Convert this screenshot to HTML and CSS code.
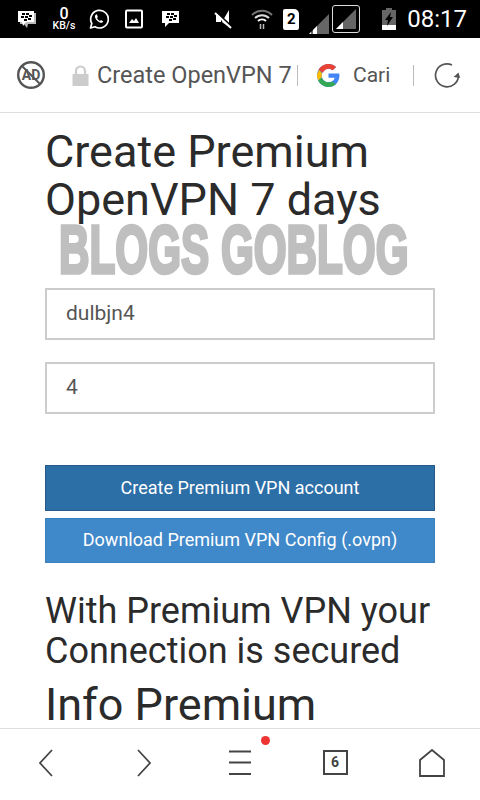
FILE: index.html
```html
<!DOCTYPE html>
<html lang="en">
<head>
    <meta charset="UTF-8" />
    <meta name="viewport" content="width=device-width, initial-scale=1.0" />
    <title>Create Premium OpenVPN 7 days</title>
    <link rel="stylesheet" href="styles.css">
</head>
<body>
    <div class="phone">
        <!-- Android status bar -->
        <div class="status-bar">
            <div class="status-left">
                <svg class="ic-bbm" width="21" height="20" viewBox="0 0 21 20">
                    <path d="M3 4h16v11h-8l-1 4-3-4H3z" fill="#bbb"/>
                    <path d="M1 2h16v11H9l-3 4-1-4H1z" fill="#fff"/>
                    <g fill="#000"><rect x="5" y="4" width="3" height="2"/><rect x="9" y="4" width="3" height="2"/><rect x="4" y="7" width="3" height="2"/><rect x="8" y="7" width="3" height="2"/><rect x="12" y="6" width="3" height="2"/><rect x="7" y="10" width="3" height="2"/><rect x="11" y="9" width="3" height="2"/></g>
                </svg>
                <div class="speed">
                    <span class="speed-num">0</span>
                    <span class="speed-unit">KB/s</span>
                </div>
                <svg class="ic-wa" width="20" height="20" viewBox="0 0 20 20">
                    <path d="M1.5 19l1.3-4.6A8.8 8.8 0 1 1 6 17.7z" fill="none" stroke="#fff" stroke-width="1.7" stroke-linejoin="round"/>
                    <path d="M7 5.5c-1.200.7-1.300 2.200-.6 3.800 1 2 2.600 3.500 4.500 4.300 1.400.5 2.800.1 3.400-1.200l-2.300-1.400-1 1c-1.300-.5-2.400-1.600-3-3l.9-1L7.800 5.300z" fill="#fff"/>
                </svg>
                <svg class="ic-pic" width="18" height="20" viewBox="0 0 18 20">
                    <rect x="1" y="1.500" width="16" height="17" rx="1" fill="none" stroke="#fff" stroke-width="2"/>
                    <path d="M4 14l3-4 2 2 2-3 3 5z" fill="#fff"/>
                </svg>
                <svg class="ic-bbm2" width="19" height="18" viewBox="0 0 19 18">
                    <path d="M1 1h17v12H8l-4 4v-4H1z" fill="#fff"/>
                    <g fill="#000"><rect x="6" y="3" width="3" height="2"/><rect x="10" y="3" width="3" height="2"/><rect x="5" y="6" width="3" height="2"/><rect x="9" y="6" width="3" height="2"/><rect x="13" y="5" width="3" height="2"/><rect x="8" y="9" width="3" height="2"/><rect x="12" y="8" width="3" height="2"/></g>
                </svg>
            </div>
            <div class="status-right">
                <svg class="ic-mute" width="18" height="20" viewBox="0 0 18 20">
                    <path d="M15 1v17l-7-5z" fill="#fff"/>
                    <path d="M2 6h5v7H2z" fill="#fff"/>
                    <path d="M1 2l16 15" stroke="#000" stroke-width="2"/>
                    <path d="M1 4l16 15" stroke="#fff" stroke-width="2"/>
                </svg>
                <svg class="ic-wifi" width="22" height="22" viewBox="0 0 22 22">
                    <path d="M1 7a14 14 0 0 1 20 0" fill="none" stroke="#777" stroke-width="2"/>
                    <path d="M4 10a10 10 0 0 1 14 0" fill="none" stroke="#ddd" stroke-width="2"/>
                    <path d="M7 13a6 6 0 0 1 8 0" fill="none" stroke="#fff" stroke-width="2"/>
                    <path d="M9.500 16v5M12.500 16v5" stroke="#bbb" stroke-width="1.500"/>
                </svg>
                <span class="sim">2</span>
                <svg class="ic-signal" width="21" height="21" viewBox="0 0 21 21">
                    <path d="M21 1v20H1z" fill="#666"/>
                    <path d="M5 21h4v-8l-4 4z M1 21h2v-2z" fill="#fff"/>
                </svg>
                <div class="signal-box">
                    <svg width="22" height="22" viewBox="0 0 22 22">
                        <path d="M21 1v20H1z" fill="#666"/>
                        <path d="M1 21h7v-7z" fill="#fff"/>
                    </svg>
                </div>
                <svg class="ic-batt" width="14" height="22" viewBox="0 0 14 22">
                    <path d="M4 0h6v2h4v20H0V2h4z" fill="#666"/>
                    <rect x="0" y="17" width="14" height="5" fill="#fff"/>
                    <path d="M9 4L3 12h3l-1 6 6-9H8z" fill="#000"/>
                </svg>
                <span class="clock">08:17</span>
            </div>
        </div>

        <!-- browser address bar -->
        <div class="address-bar">
            <div class="ad-block">
                <svg width="30" height="30" viewBox="0 0 30 30">
                    <circle cx="15" cy="15" r="12.800" fill="none" stroke="#555" stroke-width="2.400"/>
                    <path d="M6 6l18 18" stroke="#555" stroke-width="2"/>
                </svg>
                <span class="ad-text">AD</span>
            </div>
            <svg class="ic-lock" width="17" height="21" viewBox="0 0 17 21">
                <path d="M4 10V6a4.500 4.500 0 0 1 9 0v4" fill="none" stroke="#ccc" stroke-width="2.200"/>
                <rect x="0.500" y="9" width="16" height="12" fill="#ccc"/>
            </svg>
            <span class="page-title">Create OpenVPN 7</span>
            <span class="bar-sep"></span>
            <svg class="ic-google" width="25" height="25" viewBox="0 0 48 48">
                <path d="M44.500 20H24v8.500h11.800C34.700 33.900 30.100 37 24 37c-7.200 0-13-5.800-13-13s5.800-13 13-13c3.100 0 5.900 1.100 8.100 2.900l6.400-6.400C34.600 4.100 29.600 2 24 2 11.800 2 2 11.800 2 24s9.800 22 22 22c11 0 21-8 21-22 0-1.300-.2-2.700-.5-4z" fill="#4285f4"/>
                <path d="M6.300 13.700l7 5.100C15.100 14.300 19.200 11 24 11c3.100 0 5.900 1.100 8.100 2.900l6.400-6.400C34.600 4.100 29.600 2 24 2 15.600 2 8.300 6.800 4.600 13.700z" fill="#ea4335"/>
                <path d="M24 46c5.500 0 10.400-1.900 14.200-5.100l-6.600-5.500C29.500 36.900 26.900 37 24 37c-6 0-11.100-3.800-12.900-9.300l-7 5.400C7.700 40.600 15.300 46 24 46z" fill="#34a853"/>
                <path d="M6 13.500C3.500 17.200 2 20.400 2 24s.8 6.600 2.100 9.100l7-5.400c-.5-1.200-.1-2.400-.1-3.700s.1-2.900.5-4.200l-5.500-6.300z" fill="#fbbc05"/>
            </svg>
            <span class="search-label">Cari</span>
            <span class="bar-sep bar-sep-2"></span>
            <svg class="ic-reload" width="27" height="27" viewBox="0 0 27 27">
                <path d="M24.500 13.500A11.500 11.500 0 1 1 18 3" fill="none" stroke="#555" stroke-width="1.700"/>
                <path d="M26 13l-6.500-1 5-4.500z" fill="#555" transform="translate(0 3)"/>
            </svg>
        </div>

        <!-- page -->
        <div class="page">
            <h1>Create Premium OpenVPN 7 days</h1>
            <hr class="rule">
            <input class="field" type="text" value="dulbjn4">
            <input class="field" type="text" value="4">
            <button class="btn btn-dark">Create Premium VPN account</button>
            <button class="btn btn-light">Download Premium VPN Config (.ovpn)</button>
            <h2>With Premium VPN your Connection is secured</h2>
            <h3>Info Premium</h3>
            <div class="watermark">BLOGS GOBLOG</div>
        </div>

        <!-- browser toolbar -->
        <div class="bottom-bar">
            <svg class="back-icon" width="16" height="28" viewBox="0 0 16 28"><path d="M14 1L2 14l12 13" fill="none" stroke="#444" stroke-width="1.800"/></svg>
            <svg width="16" height="28" viewBox="0 0 16 28"><path d="M2 1l12 13L2 27" fill="none" stroke="#444" stroke-width="1.800"/></svg>
            <div class="menu-btn">
                <svg width="22" height="26" viewBox="0 0 22 26"><path d="M0 1.500h22M0 12.500h22M0 24h22" stroke="#444" stroke-width="1.800"/></svg>
                <span class="red-dot"></span>
            </div>
            <span class="tab-count">6</span>
            <svg width="26" height="28" viewBox="0 0 26 28"><path d="M1 27V11L13 1l12 10v16z" fill="none" stroke="#444" stroke-width="1.800"/></svg>
        </div>
    </div>
</body>
</html>
```
FILE: styles.css
```css
* {
    box-sizing: border-box;
}
html, body {
    margin: 0;
    padding: 0;
    background: #fff;
}
body {
    font-family: Roboto, "Liberation Sans", sans-serif;
}
svg {
    display: block;
    flex: none;
}
.phone {
    width: 480px;
    height: 800px;
    display: flex;
    flex-direction: column;
    overflow: hidden;
}

/* status bar */
.status-bar {
    height: 38px;
    flex: none;
    background: #000;
    color: #fff;
    display: flex;
    justify-content: space-between;
    align-items: center;
    padding: 0 13px 0 17px;
}
.status-left, .status-right {
    display: flex;
    align-items: center;
}
.speed {
    width: 24px;
    margin-left: 14px;
    display: flex;
    flex-direction: column;
    align-items: center;
    line-height: 1;
}
.speed-num {
    font-size: 16px;
    font-weight: 500;
    height: 15px;
}
.speed-unit {
    font-size: 10.5px;
    font-weight: 500;
}
.ic-wa {
    margin-left: 13px;
}
.ic-pic {
    margin-left: 16px;
}
.ic-bbm2 {
    margin-left: 18px;
}
.sim {
    width: 16px;
    height: 21px;
    margin-left: 10px;
    background: #fff;
    color: #000;
    border-radius: 2px 5px 2px 2px;
    font-size: 15px;
    font-weight: 700;
    line-height: 21px;
    text-align: center;
}
.ic-wifi {
    margin-left: 19px;
}
.ic-signal {
    margin-left: 9px;
    margin-top: 8px;
}
.signal-box {
    width: 28px;
    height: 28px;
    margin-left: 3px;
    border: 1.500px solid #ddd;
    border-radius: 3px;
    display: flex;
    align-items: center;
    justify-content: center;
}
.ic-batt {
    margin-left: 22px;
}
.clock {
    font-size: 24px;
    margin-left: 11px;
    line-height: 1;
}

/* address bar */
.address-bar {
    height: 75px;
    flex: none;
    display: flex;
    align-items: center;
    padding: 0 0 0 16px;
    border-bottom: 1px solid #ddd;
    color: #555;
}
.ad-block {
    position: relative;
}
.ad-text {
    position: absolute;
    inset: 0;
    text-align: center;
    font-size: 14px;
    font-weight: 700;
    line-height: 30px;
    color: #555;
}
.ic-lock {
    margin-left: 26px;
}
.page-title {
    font-size: 23.5px;
    margin-left: 8px;
    width: 200px;
    overflow: hidden;
    white-space: nowrap;
}
.bar-sep {
    width: 1px;
    height: 21px;
    background: #bbb;
}
.ic-google {
    margin-left: 18px;
}
.search-label {
    font-size: 21px;
    margin-left: 12px;
}
.bar-sep-2 {
    margin-left: 23px;
}
.ic-reload {
    margin-left: 20px;
}

/* page content */
.page {
    flex: 1;
    position: relative;
    overflow: hidden;
    padding: 15px 45px 0;
    color: #2b2b2b;
    display: flex;
    flex-direction: column;
}
h1, h2, h3 {
    font-weight: 400;
    margin: 0;
}
h1 {
    font-size: 45px;
    line-height: 48px;
}
.rule {
    width: 100%;
    height: 1px;
    border: 0;
    background: #eee;
    margin: 34px 0 30px;
}
.field {
    width: 100%;
    height: 52px;
    flex: none;
    border: 2px solid #ccc;
    padding: 0 19px 2px;
    margin: 0 0 22px;
    font-family: inherit;
    font-size: 21px;
    color: #555;
    background: #fff;
    border-radius: 0;
    outline: none;
}
.btn {
    width: 100%;
    flex: none;
    font-family: inherit;
    font-size: 18px;
    color: #fff;
    border-radius: 0;
    cursor: pointer;
    padding: 0 0 2px;
}
.btn-dark {
    height: 46px;
    margin-top: 29px;
    background: #2c6ea6;
    border: 1px solid #24598a;
}
.btn-light {
    height: 45px;
    margin-top: 7px;
    background: #3f88c9;
    border: 1px solid #3a81c0;
}
h2 {
    font-size: 36px;
    line-height: 40px;
    margin-top: 28px;
}
h3 {
    font-size: 45px;
    line-height: 48px;
    margin-top: 10px;
    white-space: nowrap;
}
.watermark {
    position: absolute;
    left: 59px;
    top: 100px;
    font-family: "Liberation Sans", sans-serif;
    font-size: 69px;
    font-weight: 700;
    line-height: 74px;
    white-space: nowrap;
    color: #bfbfbf;
    -webkit-text-stroke: 3.5px #bfbfbf;
    transform: scaleX(0.612);
    transform-origin: left top;
}

/* bottom toolbar */
.bottom-bar {
    height: 72px;
    flex: none;
    border-top: 1px solid #ddd;
    background: #fff;
    display: grid;
    grid-template-columns: repeat(5, 96px);
    justify-items: center;
    align-items: center;
    padding-bottom: 4px;
}
.back-icon {
    margin-right: 4px;
}
.menu-btn {
    position: relative;
}
.red-dot {
    position: absolute;
    left: 32px;
    top: -14px;
    width: 9px;
    height: 9px;
    border-radius: 50%;
    background: #ee3333;
}
.tab-count {
    width: 25px;
    height: 25px;
    margin-right: 2px;
    border: 2px solid #444;
    color: #444;
    font-size: 14px;
    font-weight: 700;
    line-height: 21px;
    text-align: center;
}
```
